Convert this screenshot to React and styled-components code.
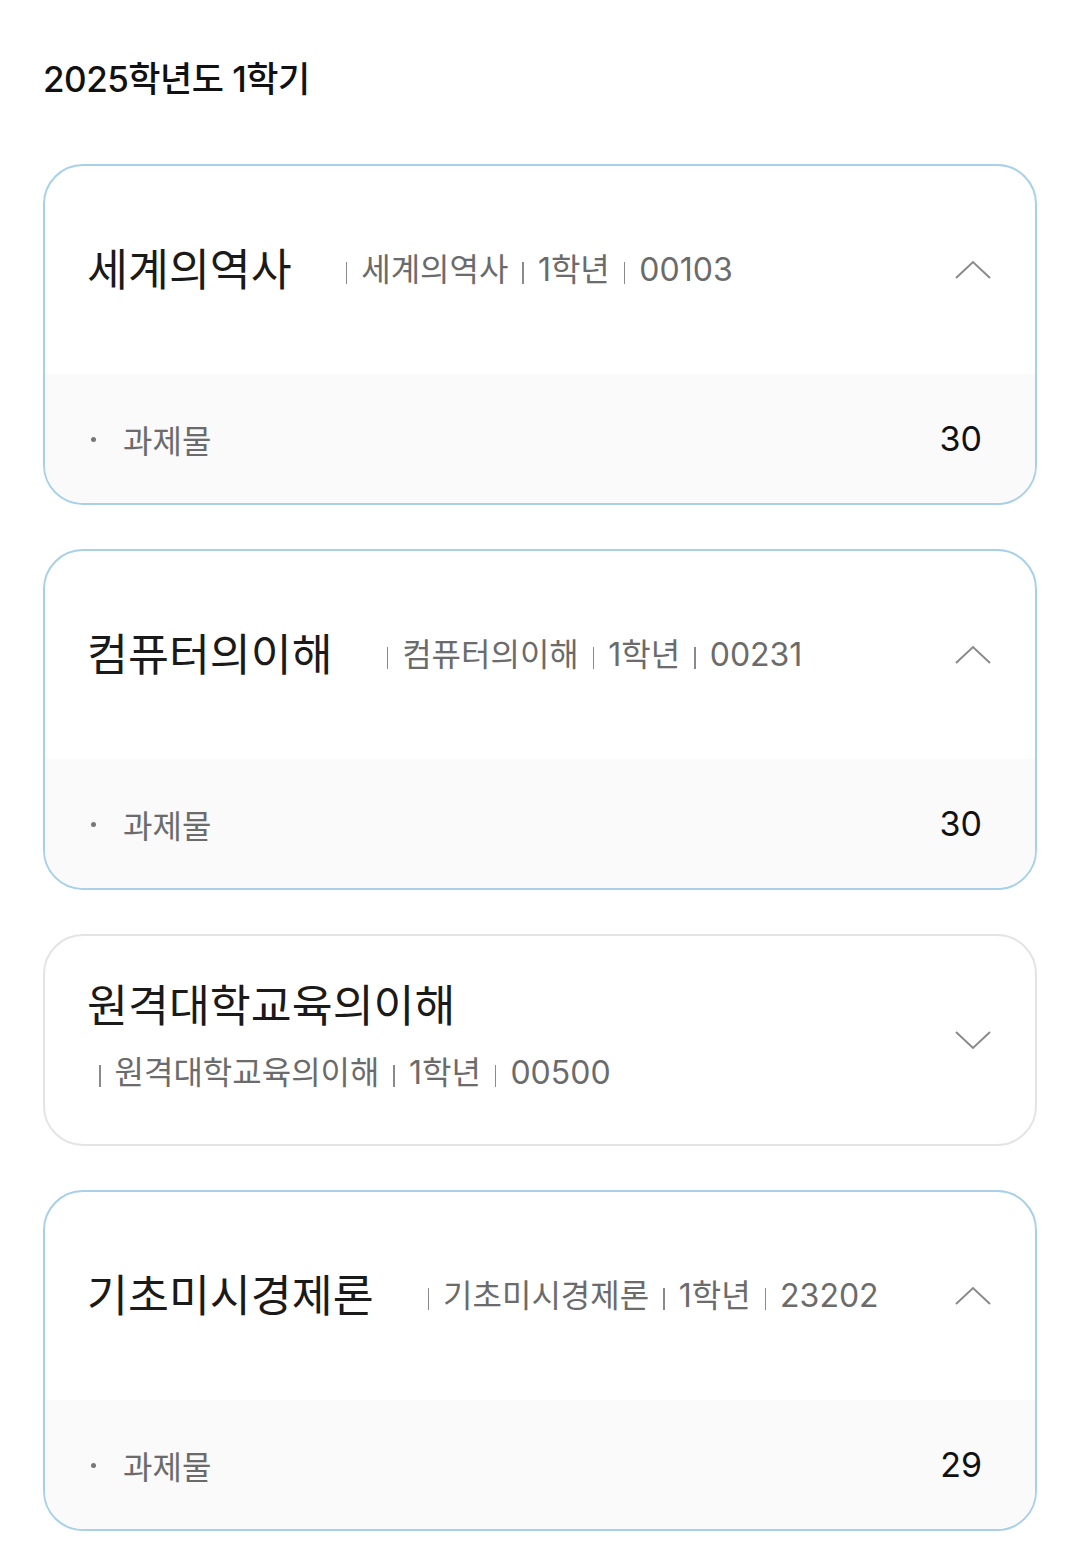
import React from 'react'
import styled, { createGlobalStyle } from 'styled-components'

const GlobalStyle = createGlobalStyle`
  html, body {
    margin: 0;
    padding: 0;
    background: #fff;
  }
  body {
    font-family: "Inter", "Noto Sans CJK KR", sans-serif;
    color: #111;
  }
`

const Page = styled.div`
  padding: 56px 43px 36px 43px;
  display: flex;
  flex-direction: column;
`

const Semester = styled.h1`
  margin: 0 0 62px 0;
  font-size: 35px;
  font-weight: 500;
  line-height: 46px;
  color: #111;
  letter-spacing: -0.5px;
`

const CardList = styled.div`
  display: flex;
  flex-direction: column;
  gap: 44px;
`

const Card = styled.div`
  border: 2px solid ${p => (p.open ? '#a8d0e8' : '#e4e4e4')};
  border-radius: 40px;
  overflow: hidden;
  background: #fff;
`

const Header = styled.div`
  min-height: 208px;
  box-sizing: border-box;
  display: flex;
  align-items: center;
  padding: 0 42px 0 42px;
`

const TitleWrap = styled.div`
  flex: 1;
  display: flex;
  flex-wrap: wrap;
  align-items: center;
  row-gap: 20px;
  margin-bottom: ${p => (p.open ? '0' : '8px')};
`

const Title = styled.span`
  font-size: 44.5px;
  font-weight: 400;
  color: #1a1a1a;
  margin-right: 42px;
  line-height: 54px;
`

const Sub = styled.span`
  font-size: 32px;
  color: #6b6b6b;
  padding-left: 12px;
  line-height: 40px;
  display: flex;
  align-items: center;
  white-space: nowrap;
`

const Bar = styled.span`
  display: inline-block;
  width: 1.5px;
  height: 22px;
  background: #8a8a8a;
  margin: 5px 14px 0 14px;
  &:first-child {
    margin-left: 0;
  }
`

const Chevron = styled.svg`
  width: 36px;
  height: 20px;
  flex-shrink: 0;
  margin-right: 2px;
`

const Body = styled.div`
  background: #fafafa;
  min-height: 129px;
  display: flex;
  flex-direction: column;
  justify-content: center;
  padding: 0 53px 0 46px;
`

const Row = styled.div`
  display: flex;
  align-items: center;
`

const Dot = styled.span`
  width: 5px;
  height: 5px;
  border-radius: 50%;
  background: #777;
  margin: 2px 27px 0 0;
`

const Label = styled.span`
  flex: 1;
  font-size: 32px;
  color: #6b6b6b;
`

const Count = styled.span`
  font-size: 34px;
  color: #111;
  font-weight: 400;
`

const courses = [
  { name: '세계의역사', grade: '1학년', code: '00103', open: true, count: 30 },
  { name: '컴퓨터의이해', grade: '1학년', code: '00231', open: true, count: 30 },
  { name: '원격대학교육의이해', grade: '1학년', code: '00500', open: false },
  { name: '기초미시경제론', grade: '1학년', code: '23202', open: true, count: 29 },
]

function Arrow({ up }) {
  return (
    <Chevron viewBox="0 0 36 20">
      <polyline
        points={up ? '1,18 18,2 35,18' : '1,2 18,18 35,2'}
        fill="none"
        stroke="#8a8a8a"
        strokeWidth="2"
      />
    </Chevron>
  )
}

export default function App() {
  return (
    <>
      <GlobalStyle />
      <Page>
        <Semester>2025학년도 1학기</Semester>
        <CardList>
          {courses.map(c => (
            <Card key={c.code} open={c.open}>
              <Header>
                <TitleWrap open={c.open}>
                  <Title>{c.name}</Title>
                  <Sub>
                    <Bar />
                    {c.name}
                    <Bar />
                    {c.grade}
                    <Bar />
                    {c.code}
                  </Sub>
                </TitleWrap>
                <Arrow up={c.open} />
              </Header>
              {c.open && (
                <Body>
                  <Row>
                    <Dot />
                    <Label>과제물</Label>
                    <Count>{c.count}</Count>
                  </Row>
                </Body>
              )}
            </Card>
          ))}
        </CardList>
      </Page>
    </>
  )
}
